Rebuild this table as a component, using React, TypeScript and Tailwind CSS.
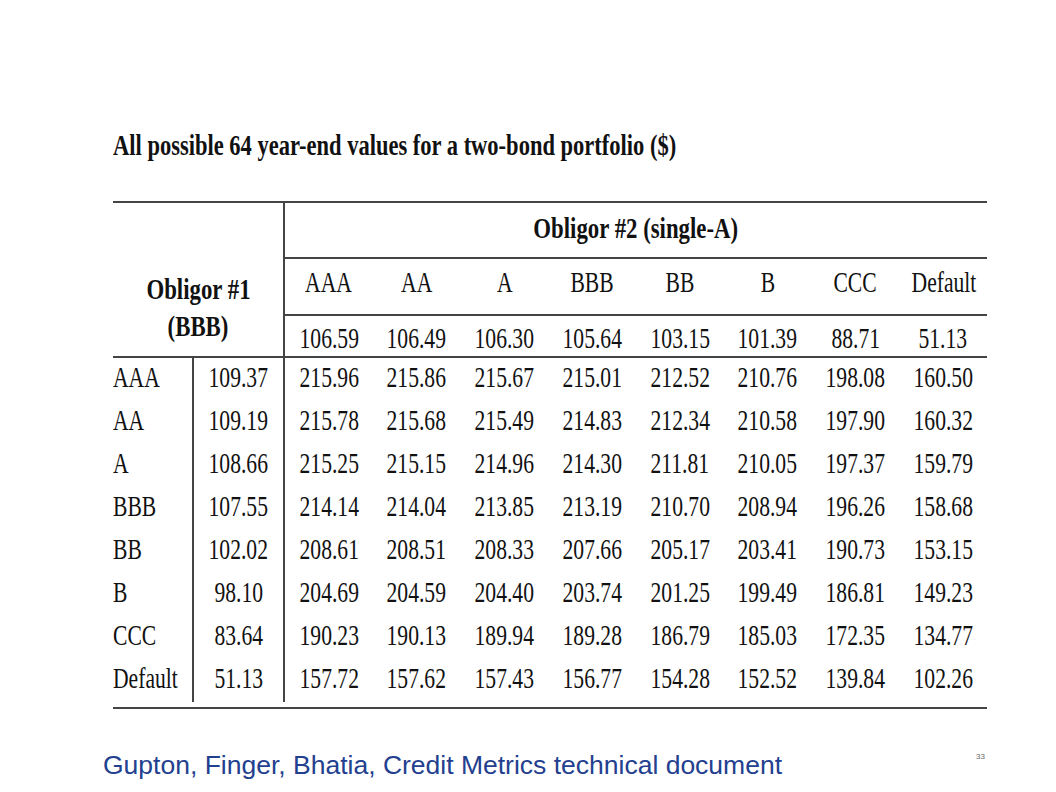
import React from "react";

const ratings = ["AAA", "AA", "A", "BBB", "BB", "B", "CCC", "Default"];
const obligor2 = ["106.59", "106.49", "106.30", "105.64", "103.15", "101.39", "88.71", "51.13"];

const rows: { label: string; value: string; cells: string[] }[] = [
  { label: "AAA", value: "109.37", cells: ["215.96", "215.86", "215.67", "215.01", "212.52", "210.76", "198.08", "160.50"] },
  { label: "AA", value: "109.19", cells: ["215.78", "215.68", "215.49", "214.83", "212.34", "210.58", "197.90", "160.32"] },
  { label: "A", value: "108.66", cells: ["215.25", "215.15", "214.96", "214.30", "211.81", "210.05", "197.37", "159.79"] },
  { label: "BBB", value: "107.55", cells: ["214.14", "214.04", "213.85", "213.19", "210.70", "208.94", "196.26", "158.68"] },
  { label: "BB", value: "102.02", cells: ["208.61", "208.51", "208.33", "207.66", "205.17", "203.41", "190.73", "153.15"] },
  { label: "B", value: "98.10", cells: ["204.69", "204.59", "204.40", "203.74", "201.25", "199.49", "186.81", "149.23"] },
  { label: "CCC", value: "83.64", cells: ["190.23", "190.13", "189.94", "189.28", "186.79", "185.03", "172.35", "134.77"] },
  { label: "Default", value: "51.13", cells: ["157.72", "157.62", "157.43", "156.77", "154.28", "152.52", "139.84", "102.26"] },
];

// the table in the slide is a squashed scan, so text is narrowed with scale-x
const Narrow = ({ children, left, bold }: { children: React.ReactNode; left?: boolean; bold?: boolean }) => (
  <span
    className={`inline-block whitespace-nowrap ${bold ? "scale-x-[0.76]" : "scale-x-[0.72]"} ${
      left ? "origin-left" : "origin-center"
    }`}
  >
    {children}
  </span>
);

export default function App() {
  return (
    <div className="relative h-[792px] w-[1056px] overflow-hidden bg-white font-['Liberation_Serif',serif] text-[#111]">
      <div className="pl-[113px] pt-[125px]">
        <h1 className="h-[48px] text-[30px] font-bold leading-[40px]">
          <span className="inline-block origin-left scale-x-[0.75] whitespace-nowrap">
            All possible 64 year-end values for a two-bond portfolio ($)
          </span>
        </h1>

        <div className="mt-[28px] w-[874px] border-t-2 border-b-2 border-[#444] text-[30px] leading-none">
          {/* header */}
          <div className="flex border-b-2 border-[#444]">
            <div className="flex w-[170px] flex-col items-center pt-[71px] font-bold">
              <div className="h-[37px]">
                <Narrow bold>Obligor #1</Narrow>
              </div>
              <div>
                <Narrow bold>(BBB)</Narrow>
              </div>
            </div>
            <div className="flex-1 border-l-2 border-[#444]">
              <div className="flex h-[56px] items-center justify-center border-b-2 border-[#444] pb-[5px] font-bold">
                <Narrow bold>Obligor #2 (single-A)</Narrow>
              </div>
              <div className="grid h-[57px] grid-cols-8 items-center border-b-2 border-[#444] pb-[9px]">
                {ratings.map((r) => (
                  <div key={r} className="text-center">
                    <Narrow>{r}</Narrow>
                  </div>
                ))}
              </div>
              <div className="grid h-[40px] grid-cols-8 items-center pt-[3px]">
                {obligor2.map((v, i) => (
                  <div key={i} className="text-center">
                    <Narrow>{v}</Narrow>
                  </div>
                ))}
              </div>
            </div>
          </div>

          {/* body */}
          <div className="flex pb-[5px]">
            <div className="w-[79px]">
              {rows.map((r) => (
                <div key={r.label} className="flex h-[43px] items-center pb-[5px]">
                  <Narrow left>{r.label}</Narrow>
                </div>
              ))}
            </div>
            <div className="w-[91px] border-l-2 border-[#444]">
              {rows.map((r) => (
                <div key={r.label} className="flex h-[43px] items-center justify-center pb-[5px]">
                  <Narrow>{r.value}</Narrow>
                </div>
              ))}
            </div>
            <div className="flex-1 border-l-2 border-[#444]">
              {rows.map((r) => (
                <div key={r.label} className="grid h-[43px] grid-cols-8 items-center pb-[5px]">
                  {r.cells.map((c, i) => (
                    <div key={i} className="text-center">
                      <Narrow>{c}</Narrow>
                    </div>
                  ))}
                </div>
              ))}
            </div>
          </div>
        </div>
      </div>

      <div className="flex items-start justify-between pl-[103px] pr-[71px] pt-[40px]">
        <p className="font-['Liberation_Sans',sans-serif] text-[26.5px] leading-[32px] text-[#23408f]">
          Gupton, Finger, Bhatia, Credit Metrics technical document
        </p>
        <span className="pt-[2px] font-['Liberation_Sans',sans-serif] text-[8px] text-[#666]">33</span>
      </div>
    </div>
  );
}
